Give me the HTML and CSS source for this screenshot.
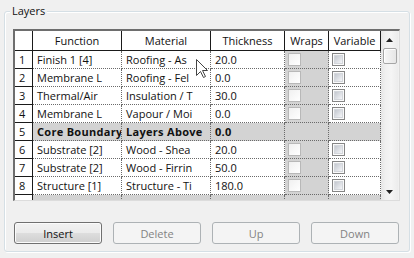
FILE: index.html
```html
<!DOCTYPE html>
<html>
<head>
<meta charset="utf-8">
<link rel="stylesheet" href="styles.css">
</head>
<body>
<fieldset class="group">
  <legend class="group-label">Layers</legend>
  <div class="frame">
    <div class="grid">
      <div class="hcell"></div>
      <div class="hcell">Function</div>
      <div class="hcell">Material</div>
      <div class="hcell">Thickness</div>
      <div class="hcell">Wraps</div>
      <div class="hcell">Variable</div>

      <div class="num">1</div><div class="cell">Finish 1 [4]</div><div class="cell">Roofing - As</div><div class="cell">20.0</div><div class="cell wraps"><span class="cb cb-off"></span></div><div class="cell"><span class="cb cb-var"></span></div>
      <div class="num">2</div><div class="cell">Membrane L</div><div class="cell">Roofing - Fel</div><div class="cell">0.0</div><div class="cell wraps"><span class="cb cb-off"></span></div><div class="cell"><span class="cb cb-var"></span></div>
      <div class="num">3</div><div class="cell">Thermal/Air</div><div class="cell">Insulation / T</div><div class="cell">30.0</div><div class="cell wraps"><span class="cb cb-off"></span></div><div class="cell"><span class="cb cb-var"></span></div>
      <div class="num">4</div><div class="cell">Membrane L</div><div class="cell">Vapour / Moi</div><div class="cell">0.0</div><div class="cell wraps"><span class="cb cb-off"></span></div><div class="cell"><span class="cb cb-var"></span></div>
      <div class="num">5</div><div class="cell core">Core Boundary</div><div class="cell core">Layers Above</div><div class="cell core">0.0</div><div class="cell core"></div><div class="cell core"></div>
      <div class="num">6</div><div class="cell">Substrate [2]</div><div class="cell">Wood - Shea</div><div class="cell">20.0</div><div class="cell wraps"><span class="cb cb-off"></span></div><div class="cell"><span class="cb cb-var"></span></div>
      <div class="num">7</div><div class="cell">Substrate [2]</div><div class="cell">Wood - Firrin</div><div class="cell">50.0</div><div class="cell wraps"><span class="cb cb-off"></span></div><div class="cell"><span class="cb cb-var"></span></div>
      <div class="num">8</div><div class="cell">Structure [1]</div><div class="cell">Structure - Ti</div><div class="cell">180.0</div><div class="cell wraps"><span class="cb cb-off"></span></div><div class="cell"><span class="cb cb-var"></span></div>
      <div class="num">9</div><div class="cell core">Core Boundary</div><div class="cell core">Layers Below</div><div class="cell core">0.0</div><div class="cell core"></div><div class="cell core"></div>
    </div>
    <div class="scrollbar">
      <div class="sb-btn"><svg width="7" height="4" viewBox="0 0 7 4"><polygon points="3.5,0 7,4 0,4" fill="#222"/></svg></div>
      <div class="sb-thumb"></div>
      <div class="sb-track"></div>
      <div class="sb-btn"><svg width="7" height="4" viewBox="0 0 7 4"><polygon points="0,0 7,0 3.5,4" fill="#222"/></svg></div>
    </div>
  </div>
  <div class="buttons">
    <button class="btn">Insert</button>
    <button class="btn btn-disabled">Delete</button>
    <button class="btn btn-disabled">Up</button>
    <button class="btn btn-disabled">Down</button>
  </div>
</fieldset>
<svg class="cursor" width="13" height="20" viewBox="0 0 13 20"><polygon points="0.5,0.5 0.5,16.5 4.5,12.5 7.5,18.5 9.5,17.5 6.5,11.5 11.5,11.5" fill="#fff" stroke="#444" stroke-width="1"/></svg>
</body>
</html>
```

FILE: styles.css
```css
html, body {
  margin: 0;
  padding: 0;
}
body {
  width: 414px;
  height: 258px;
  background: #f0f0f0;
  font-family: "Open Sans", "Liberation Sans", sans-serif;
  font-size: 11px;
  color: #111;
  overflow: hidden;
  position: relative;
}
.group {
  box-sizing: border-box;
  width: 406px;
  margin: 4px 0 0 4px;
  padding: 11px 0 7px 8px;
  border: 1px solid #d5dfe5;
  border-radius: 3px;
  box-shadow: inset 1px 1px 0 #fff, 1px 1px 0 #fff;
}
.group-label {
  margin-left: -3px;
  padding: 0 2px;
  line-height: 14px;
  background: #f0f0f0;
}
.frame {
  display: flex;
  width: 384px;
  border-style: solid;
  border-width: 2px 1px 1px 2px;
  border-color: #6e6e6e #dcdcdc #dcdcdc #6e6e6e;
}
.grid {
  display: grid;
  grid-template-columns: 18px 89px 89px 74px 44px 52px;
  grid-template-rows: 20px;
  grid-auto-rows: 18px;
  height: 169px;
  overflow: hidden;
  background: #fff;
}
.hcell {
  box-sizing: border-box;
  border-right: 1px solid #1a1a1a;
  border-bottom: 1px solid #1a1a1a;
  text-align: center;
  line-height: 19px;
  white-space: nowrap;
  overflow: hidden;
}
.num {
  box-sizing: border-box;
  border-right: 1px solid #1a1a1a;
  border-bottom: 1px solid #1a1a1a;
  padding-left: 4px;
  line-height: 17px;
}
.cell {
  box-sizing: border-box;
  border-right: 1px dotted #6a6a6a;
  border-bottom: 1px dotted #6a6a6a;
  padding: 0 0 0 4px;
  line-height: 17px;
  white-space: nowrap;
  overflow: hidden;
}
.wraps {
  background: #d3d3d3;
}
.core {
  background: #d3d3d3;
  font-weight: bold;
  letter-spacing: 0.3px;
}
.cb {
  display: block;
  box-sizing: border-box;
  width: 13px;
  height: 13px;
  margin: 2px 0 0 -1px;
}
.cb-off {
  border: 1px solid #b8b8b8;
  background: linear-gradient(135deg, #f0f0f0, #ffffff);
}
.cb-var {
  border: 1px solid #858585;
  background: #fafafa;
  padding: 2px;
}
.cb-var::before {
  content: "";
  display: block;
  width: 7px;
  height: 7px;
  background: linear-gradient(135deg, #c4c8cf, #f4f5f8);
  box-shadow: 0 0 0 1px #d3d6db;
}
.scrollbar {
  display: flex;
  flex-direction: column;
  width: 17px;
  height: 169px;
  background: linear-gradient(to right, #e6e6e6, #f0f0f0 25%, #f5f5f5 60%, #ececec);
}
.sb-btn {
  height: 17px;
  display: flex;
  align-items: center;
  justify-content: center;
}
.sb-thumb {
  height: 16px;
  margin: 0 1px 0 2px;
  border: 1px solid #a6a6a6;
  border-radius: 2px;
  box-sizing: border-box;
  background: linear-gradient(to right, #f7f7f7, #e6e6e6);
  box-shadow: inset 1px 1px 0 #fff;
}
.sb-track {
  flex: 1;
}
.buttons {
  display: flex;
  gap: 11px;
  margin: 21px 0 0 1px;
}
.btn {
  box-sizing: border-box;
  width: 88px;
  height: 22px;
  padding: 0;
  border: 1px solid #707070;
  border-radius: 3px;
  background: linear-gradient(#f2f2f2 0%, #ebebeb 48%, #dddddd 52%, #cfcfcf 100%);
  box-shadow: inset 0 0 0 1px #fbfbfb;
  font-family: "Open Sans", "Liberation Sans", sans-serif;
  font-size: 11px;
  color: #111;
}
.btn-disabled {
  border-color: #adb2b5;
  background: #f4f4f4;
  box-shadow: none;
  color: #838383;
}
.cursor {
  position: absolute;
  left: 196px;
  top: 59px;
}
```
